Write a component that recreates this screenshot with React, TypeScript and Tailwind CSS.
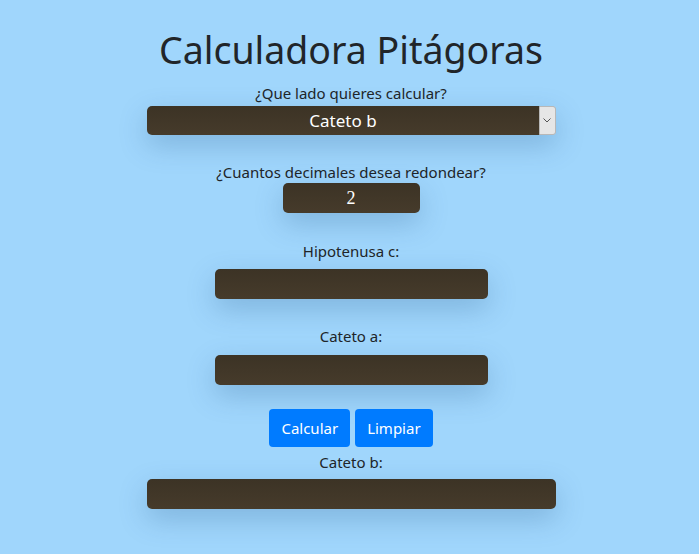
import React, { useState } from "react";

const font = { fontFamily: '"Segoe UI", "Noto Sans", "Open Sans", sans-serif' };

const fieldBox =
  "rounded-[5px] bg-gradient-to-b from-[#3c3325] to-[#463b2b] text-white shadow-[0_10px_28px_rgba(40,90,140,0.28)] outline-none border-0";

export default function App() {
  const [lado, setLado] = useState("b");
  const [dec, setDec] = useState("2");
  const [c, setC] = useState("");
  const [a, setA] = useState("");
  const [res, setRes] = useState("");

  const calcular = () => {
    const n = parseInt(dec) || 0;
    const cv = parseFloat(c);
    const av = parseFloat(a);
    if (isNaN(cv) || isNaN(av)) return;
    setRes(Math.sqrt(cv * cv - av * av).toFixed(n));
  };

  const limpiar = () => {
    setC("");
    setA("");
    setRes("");
  };

  return (
    <div
      className="min-h-[554px] w-full bg-[#a0d6fc] text-[#212529] flex flex-col items-center pt-[26px] pl-[3px]"
      style={font}
    >
      <h1 className="text-[37.5px] leading-[48px] font-normal">Calculadora Pitágoras</h1>

      <label className="mt-[7px] text-[15px] leading-6">¿Que lado quieres calcular?</label>
      <div className="relative mt-px w-[409px] h-[29px]">
        <select
          value={lado}
          onChange={(e) => setLado(e.target.value)}
          className={`${fieldBox} appearance-none w-full h-full text-center text-[17px] leading-[29px] pr-4`}
          style={font}
        >
          <option value="c">Hipotenusa c</option>
          <option value="a">Cateto a</option>
          <option value="b">Cateto b</option>
        </select>
        <div className="pointer-events-none absolute right-0 top-0 h-full w-[17px] rounded-r-[3px] bg-[#e6e6e6] border border-[#b8b8b8] flex items-center justify-center">
          <svg width="8" height="5" viewBox="0 0 8 5" fill="none">
            <path d="M0.5 0.5L4 4L7.5 0.5" stroke="#555" strokeWidth="1" />
          </svg>
        </div>
      </div>

      <label className="mt-[25px] text-[15px] leading-6">¿Cuantos decimales desea redondear?</label>
      <input
        value={dec}
        onChange={(e) => setDec(e.target.value)}
        className={`${fieldBox} -mt-px w-[137px] h-[30px] text-center text-lg`}
        style={{ fontFamily: '"Liberation Serif", "Times New Roman", serif' }}
      />

      <label className="mt-[26px] text-[15px] leading-6">Hipotenusa c:</label>
      <input
        value={c}
        onChange={(e) => setC(e.target.value)}
        className={`${fieldBox} mt-[6px] w-[273px] h-[30px] text-center text-[17px]`}
        style={font}
      />

      <label className="mt-[25px] text-[15px] leading-6">Cateto a:</label>
      <input
        value={a}
        onChange={(e) => setA(e.target.value)}
        className={`${fieldBox} mt-[7px] w-[273px] h-[30px] text-center text-[17px]`}
        style={font}
      />

      <div className="mt-[24px] flex gap-[5px]">
        <button
          onClick={calcular}
          className="h-[38px] px-3 rounded-[4px] bg-[#007bff] text-white text-[15px]"
          style={font}
        >
          Calcular
        </button>
        <button
          onClick={limpiar}
          className="h-[38px] px-3 rounded-[4px] bg-[#007bff] text-white text-[15px]"
          style={font}
        >
          Limpiar
        </button>
      </div>

      <label className="mt-[3px] text-[15px] leading-6">Cateto b:</label>
      <input
        value={res}
        readOnly
        className={`${fieldBox} mt-[5px] w-[409px] h-[30px] text-center text-[17px]`}
        style={font}
      />
    </div>
  );
}
